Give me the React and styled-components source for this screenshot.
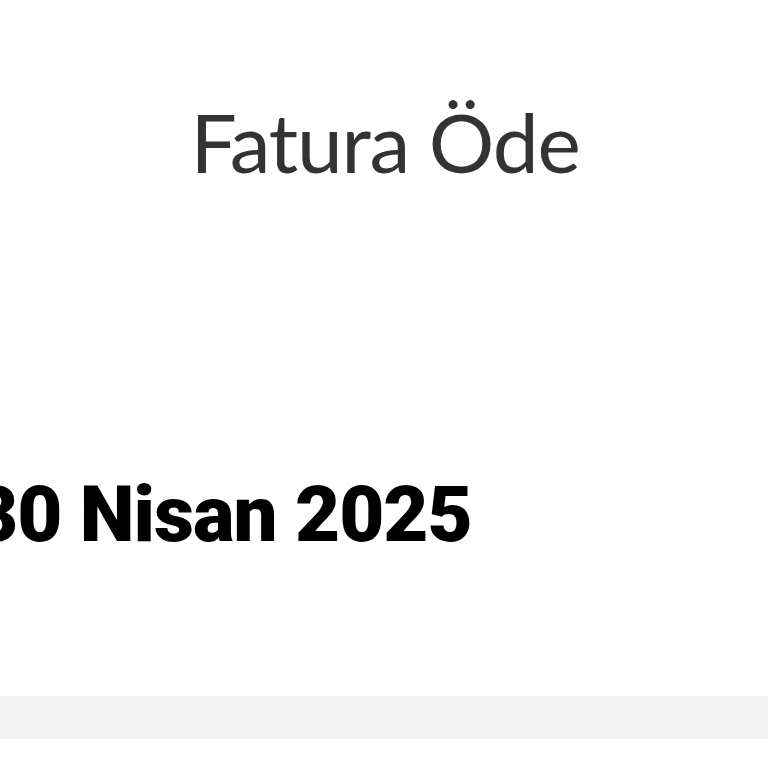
import React from 'react';
import styled, { createGlobalStyle } from 'styled-components';

const Global = createGlobalStyle`
  html, body {
    margin: 0;
    padding: 0;
    background: #ffffff;
  }
  body {
    font-family: Lato, "Open Sans", sans-serif;
  }
`;

const Page = styled.div`
  width: 768px;
  height: 768px;
  overflow: hidden;
  display: flex;
  flex-direction: column;
  background: #fff;
`;

const Header = styled.header`
  height: 200px;
  display: flex;
  justify-content: center;
  align-items: flex-start;
  padding-top: 100px;
  padding-left: 2px;
  box-sizing: border-box;
`;

const Title = styled.h1`
  margin: 0;
  font-family: Lato, "Open Sans", sans-serif;
  font-weight: 400;
  font-size: 82px;
  line-height: 1;
  color: #333333;
  letter-spacing: -1.2px;
`;

const DueDate = styled.div`
  margin-top: 276px;
  margin-left: -27px;
  font-family: Roboto, sans-serif;
  font-weight: 900;
  font-size: 78px;
  line-height: 1;
  color: #000;
  letter-spacing: -1px;
  white-space: nowrap;
`;

const Strip = styled.div`
  margin-top: 142px;
  height: 43px;
  background: #f2f2f2;
`;

export default function App() {
  return (
    <Page>
      <Global />
      <Header>
        <Title>Fatura Öde</Title>
      </Header>
      <DueDate>30 Nisan 2025</DueDate>
      <Strip />
    </Page>
  );
}
